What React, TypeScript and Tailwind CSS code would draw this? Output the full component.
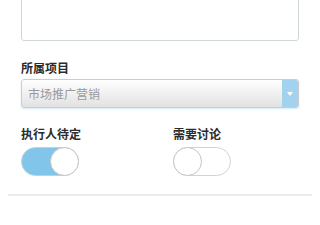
import React, { useState } from 'react';

const Toggle: React.FC<{ on: boolean; onChange: () => void }> = ({ on, onChange }) => (
    <button
        onClick={onChange}
        className={`relative w-[58px] h-[29px] rounded-full border ${on ? 'bg-[#82c5ea] border-[#b9d4e3]' : 'bg-white border-[#d2d2d2]'}`}
    >
        <span
            className={`absolute top-[-1px] w-[29px] h-[29px] rounded-full bg-white border border-[#c4c4c4] ${on ? 'right-[-1px]' : 'left-[-1px]'}`}
        />
    </button>
);

const App: React.FC = () => {
    const [pending, setPending] = useState(true);
    const [discuss, setDiscuss] = useState(false);

    return (
        <div className="w-[320px] h-[225px] overflow-hidden bg-white px-2" style={{ fontFamily: '"Noto Sans CJK SC", "Noto Sans", sans-serif' }}>
            <div className="px-[13px]">
                {/* 描述 */}
                <div className="mt-[-40px] h-[81px] rounded-[3px] border border-[#cfd6da] bg-white pl-[18px] pt-[25px] text-[12px] leading-[16px] text-[#ebebeb]">
                    请输入任务的详细描述内容
                </div>

                <div className="mt-[19px] mb-[3px] text-[12px] leading-[16px] font-bold text-[#2b2b2b]">所属项目</div>
                <div className="flex h-[29px] rounded-[3px] border border-[#cccccc] bg-gradient-to-b from-white to-[#e2e2e2] shadow-[0_1px_2px_rgba(130,195,235,0.35)]">
                    <div className="flex-1 flex items-center pl-[6px] text-[12px] text-[#9a9a9a]">市场推广营销</div>
                    <div className="w-[16px] flex items-center justify-center bg-[#a3d2ef] rounded-r-[2px]">
                        <svg width="6" height="4" viewBox="0 0 6 4">
                            <path d="M0 0 L6 0 L3 4 Z" fill="#ffffff" />
                        </svg>
                    </div>
                </div>

                <div className="flex mt-[18px]">
                    <div className="w-[152px]">
                        <div className="text-[12px] leading-[16px] font-bold text-[#2b2b2b] mb-[5px]">执行人待定</div>
                        <Toggle on={pending} onChange={() => setPending(!pending)} />
                    </div>
                    <div>
                        <div className="text-[12px] leading-[16px] font-bold text-[#2b2b2b] mb-[5px]">需要讨论</div>
                        <Toggle on={discuss} onChange={() => setDiscuss(!discuss)} />
                    </div>
                </div>
            </div>
            <div className="mt-[14px] h-[2px] bg-[#ececec]" />
        </div>
    );
};

export default App;
